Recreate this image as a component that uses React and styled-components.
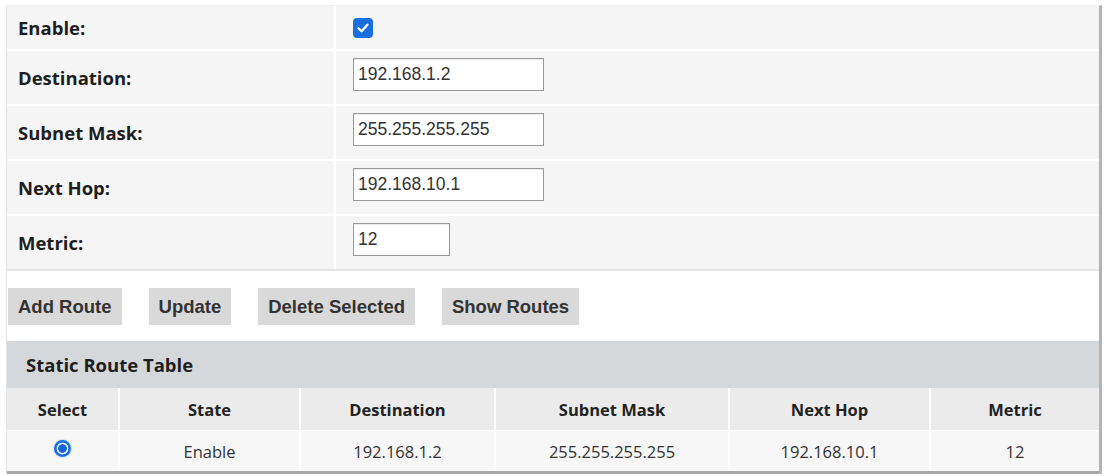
import React from 'react';
import styled, { createGlobalStyle } from 'styled-components';

const GlobalStyle = createGlobalStyle`
    body {
        margin: 0;
        background: #fff;
        font-family: 'Open Sans', 'Noto Sans', sans-serif;
        color: #222;
    }
`;

const Page = styled.div`
    margin: 5px 3px 0 6px;
    border-left: 1px solid #e4e4e4;
    border-right: 3px solid #b3b3b3;
    border-top: 1px solid #eeeeee;
    width: 1092px;
`;

const FormGrid = styled.div`
    display: grid;
    grid-template-columns: 327px 1fr;
    grid-template-rows: 43px repeat(4, 53px);
    gap: 2px;
    background: #fff;
    border-bottom: 2px solid #e6e6e6;
`;

const LabelCell = styled.div`
    background: #f5f5f5;
    display: flex;
    align-items: center;
    padding-left: 11px;
    font-weight: 700;
    font-size: 18.5px;
    color: #1e1e1e;
`;

const FieldCell = styled.div`
    background: #f5f5f5;
    display: flex;
    align-items: center;
    padding-left: 17px;
`;

const CheckBox = styled.span`
    width: 20px;
    height: 20px;
    border-radius: 4px;
    background: #1a6fe0;
    display: flex;
    align-items: center;
    justify-content: center;
`;

const TextInput = styled.input`
    box-sizing: border-box;
    width: ${(p) => p.$width}px;
    height: 33px;
    border: 1px solid #9a9a9a;
    box-shadow: inset 0 1px 1px rgba(0, 0, 0, 0.08);
    background: #fff;
    font-family: 'Liberation Sans', Arial, sans-serif;
    font-size: 17.5px;
    color: #333;
    padding: 0 4px;
    margin-top: ${(p) => p.$shift || 0}px;
`;

const Toolbar = styled.div`
    display: flex;
    gap: 27px;
    padding: 17px 0 16px 1px;
    background: #fff;
`;

const Button = styled.button`
    height: 37px;
    padding: 0 10px;
    border: none;
    background: #d9d9d9;
    font-family: 'Liberation Sans', Arial, sans-serif;
    font-weight: 700;
    font-size: 18.5px;
    color: #333;
`;

const TableTitle = styled.div`
    height: 47px;
    background: #d5d8da;
    display: flex;
    align-items: center;
    padding-left: 19px;
    font-weight: 700;
    font-size: 18.5px;
    color: #1e1e1e;
`;

const RouteTable = styled.div`
    display: grid;
    grid-template-columns: 111px 179px 193px 232px 199px 1fr;
    column-gap: 2px;
    row-gap: 1px;
    background: #fff;
    border-bottom: 3px solid #a8a8a8;
`;

const HeadCell = styled.div`
    height: 42px;
    background: #ebebeb;
    display: flex;
    align-items: center;
    justify-content: center;
    font-weight: 700;
    font-size: 16.5px;
    color: #222;
`;

const DataCell = styled.div`
    height: 40px;
    background: #f7f7f7;
    display: flex;
    align-items: center;
    justify-content: center;
    font-size: 16.5px;
    color: #333;
`;

const Radio = styled.span`
    width: 17px;
    height: 17px;
    border-radius: 50%;
    background: radial-gradient(circle, #1565d8 0 4px, #e8f1ff 4.6px 5.6px, #1a6fe0 6.2px);
    box-shadow: 0 0 2px rgba(26, 111, 224, 0.5);
    margin-top: -6px;
`;

const fields = [
    { label: 'Destination:', value: '192.168.1.2', width: 191 },
    { label: 'Subnet Mask:', value: '255.255.255.255', width: 191 },
    { label: 'Next Hop:', value: '192.168.10.1', width: 191 },
    { label: 'Metric:', value: '12', width: 97 },
];

const columns = ['Select', 'State', 'Destination', 'Subnet Mask', 'Next Hop', 'Metric'];

export default function App() {
    return (
        <>
            <GlobalStyle />
            <Page>
                <FormGrid>
                    <LabelCell>Enable:</LabelCell>
                    <FieldCell>
                        <CheckBox>
                            <svg width="14" height="14" viewBox="0 0 12 12">
                                <path d="M2.2 6.3 L4.8 8.8 L9.8 3.2" fill="none" stroke="#fff" strokeWidth="2" strokeLinecap="round" strokeLinejoin="round" />
                            </svg>
                        </CheckBox>
                    </FieldCell>
                    {fields.map((f) => (
                        <React.Fragment key={f.label}>
                            <LabelCell>{f.label}</LabelCell>
                            <FieldCell>
                                <TextInput $width={f.width} defaultValue={f.value} $shift={-6} />
                            </FieldCell>
                        </React.Fragment>
                    ))}
                </FormGrid>
                <Toolbar>
                    <Button>Add Route</Button>
                    <Button>Update</Button>
                    <Button>Delete Selected</Button>
                    <Button>Show Routes</Button>
                </Toolbar>
                <TableTitle>Static Route Table</TableTitle>
                <RouteTable>
                    {columns.map((c) => (
                        <HeadCell key={c}>{c}</HeadCell>
                    ))}
                    <DataCell><Radio /></DataCell>
                    <DataCell>Enable</DataCell>
                    <DataCell>192.168.1.2</DataCell>
                    <DataCell>255.255.255.255</DataCell>
                    <DataCell>192.168.10.1</DataCell>
                    <DataCell>12</DataCell>
                </RouteTable>
            </Page>
        </>
    );
}
